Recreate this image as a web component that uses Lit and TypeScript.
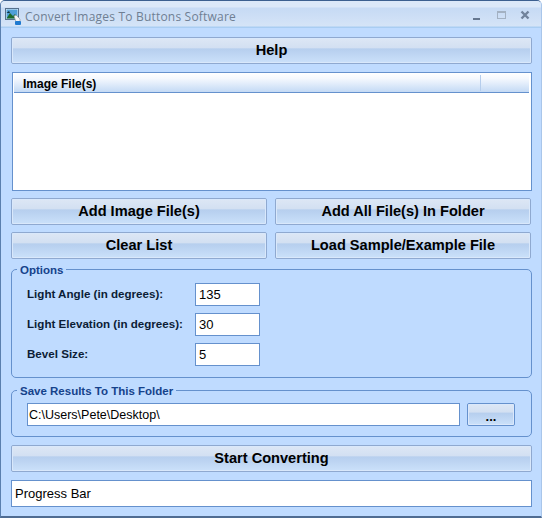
import { LitElement, html, css } from "lit";
import { customElement } from "lit/decorators.js";

@customElement("app-root")
export class AppRoot extends LitElement {
  static styles = css`
    :host {
      display: block;
      width: 542px;
      height: 518px;
      font-family: "Liberation Sans", Arial, sans-serif;
      color: #000;
    }
    * { box-sizing: border-box; }
    .window {
      width: 542px;
      height: 518px;
      display: flex;
      flex-direction: column;
      background: #bfdbff;
      border: 1px solid #5a7fae;
      border-top-color: #3b5f8f;
      border-bottom: 2px solid #4f6c92;
      border-right-color: #a9c6ea;
      border-radius: 5px 5px 0 0;
      overflow: hidden;
    }
    .titlebar {
      height: 27px;
      flex: none;
      display: flex;
      align-items: center;
      padding: 3px 0 0 4px;
      background: linear-gradient(#dbe8f8 0, #dbe8f8 6px, #c6daf4 7px, #d5e4f7 25px, #a9cdf2 26px);
      color: #6f7f93;
      gap: 3px;
    }
    .app-icon { width: 17px; height: 17px; flex: none; }
    .title {
      flex: 1;
      font-family: "Open Sans", sans-serif;
      font-size: 12px;
      letter-spacing: 0.2px;
      white-space: nowrap;
    }
    .controls { display: flex; align-items: center; padding: 0 1px 3px 0; }
    .controls svg { width: 24px; height: 14px; display: block; }
    .content {
      flex: 1;
      display: flex;
      flex-direction: column;
      padding: 9px 9px 0 9px;
      border-left: 2px solid #bfdbff;
    }
    .btn {
      display: flex;
      align-items: center;
      justify-content: center;
      height: 27px;
      padding-bottom: 2px;
      border: 1px solid #8fa9d0;
      border-radius: 2px;
      outline: 1px solid #d9e8fb;
      outline-offset: -2px;
      background: linear-gradient(#dde7f5 0, #d3e0f2 38%, #b7cfee 44%, #b9d1f0 52%, #cbe1fa 100%);
      font-size: 14.6px;
      font-weight: 700;
      color: #000;
      white-space: nowrap;
    }
    .help { margin-left: -1px; }
    .list {
      height: 119px;
      margin-top: 8px;
      background: #fff;
      border: 1px solid #6591cd;
      display: flex;
      flex-direction: column;
      padding: 0 2px 0 1px;
    }
    .list-head {
      height: 20px;
      flex: none;
      display: flex;
      align-items: center;
      padding-left: 9px;
      border-bottom: 1px solid #6591cd;
      background: linear-gradient(#fff 0, #f4f8fe 30%, #c4daf5 100%);
      font-size: 12px;
      font-weight: 700;
    }
    .col1 { width: 458px; height: 16px; line-height: 18px; border-right: 1px solid #b5cdec; }
    .row {
      display: grid;
      grid-template-columns: 256px 256px;
      gap: 8px;
      margin: 7px 0 0 -1px;
    }
    .group {
      position: relative;
      margin: 11px 0 0 -1px;
      border: 1px solid #6591cd;
      border-radius: 5px;
    }
    .legend {
      position: absolute;
      left: 5px;
      top: -7px;
      padding: 0 3px;
      background: #bfdbff;
      color: #15428b;
      font-size: 11.5px;
      font-weight: 700;
      line-height: 15px;
    }
    .options {
      height: 109px;
      margin-top: 10px;
      padding: 13px 0 0 15px;
      display: flex;
      flex-direction: column;
      gap: 7px;
    }
    .field {
      display: grid;
      grid-template-columns: 168px 65px;
      align-items: center;
      font-size: 11.6px;
      font-weight: 700;
      color: #0c1d36;
    }
    .label { padding-bottom: 2px; }
    .input {
      height: 23px;
      display: flex;
      align-items: center;
      background: #fff;
      border: 1px solid #6591cd;
      padding-left: 3px;
      font-size: 13px;
      font-weight: 400;
      color: #000;
    }
    .save {
      height: 47px;
      margin-top: 12px;
      padding: 12px 15px 0 15px;
      display: flex;
      gap: 7px;
      align-items: flex-start;
    }
    .save .input { width: 433px; font-size: 12.5px; padding-left: 1px; }
    .browse {
      width: 48px;
      height: 23px;
      border: 1px solid #6591cd;
      outline-color: #dbe8fb;
      padding: 0 0 1px;
      font-size: 13px;
      font-weight: 700;
      color: #000;
      align-items: flex-end;
    }
    .start { margin: 8px 0 0 -1px; }
    .progress {
      height: 27px;
      margin: 8px 0 0 -1px;
      background: #fff;
      border: 1px solid #6591cd;
      display: flex;
      align-items: center;
      padding-left: 3px;
      font-size: 13px;
    }
  `;

  render() {
    return html`
      <div class="window">
        <div class="titlebar">
          <svg class="app-icon" viewBox="0 0 17 17">
            <rect x="0.5" y="0.5" width="13" height="11" fill="#e9f1f8" stroke="#56708c"/>
            <rect x="1.5" y="1.5" width="11" height="9" fill="#4f9fd8"/>
            <path d="M1.5 10.5 L5 5 L8 8 L10 6 L12.5 10.5 Z" fill="#1d6a2a"/>
            <path d="M1.5 5 L4 3 L5 5 Z" fill="#0c2e3c"/>
            <path d="M9 8 L11 7 L15 11 L15 14 L11 14 Z" fill="#f4f4f4" stroke="#8a8f96" stroke-width="0.6"/>
            <rect x="10" y="13" width="6" height="4" rx="1" fill="#1f7ad0"/>
          </svg>
          <span class="title">Convert Images To Buttons Software</span>
          <div class="controls">
            <svg viewBox="0 0 24 14"><rect x="5" y="10" width="7" height="2" fill="#66778f"/></svg>
            <svg viewBox="0 0 24 14"><rect x="5.5" y="3.5" width="8" height="7" fill="none" stroke="#a3b1c2"/><rect x="5" y="3" width="9" height="2" fill="#a3b1c2"/></svg>
            <svg viewBox="0 0 24 14"><path d="M5.5 3.5 L12.5 10.5 M12.5 3.5 L5.5 10.5" stroke="#71839b" stroke-width="2.4" fill="none"/></svg>
          </div>
        </div>
        <div class="content">
          <div class="btn help">Help</div>
          <div class="list">
            <div class="list-head"><div class="col1">Image File(s)</div></div>
          </div>
          <div class="row">
            <div class="btn">Add Image File(s)</div>
            <div class="btn">Add All File(s) In Folder</div>
          </div>
          <div class="row">
            <div class="btn">Clear List</div>
            <div class="btn">Load Sample/Example File</div>
          </div>
          <div class="group options">
            <span class="legend">Options</span>
            <div class="field"><span class="label">Light Angle (in degrees):</span><div class="input">135</div></div>
            <div class="field"><span class="label">Light Elevation (in degrees):</span><div class="input">30</div></div>
            <div class="field"><span class="label">Bevel Size:</span><div class="input">5</div></div>
          </div>
          <div class="group save">
            <span class="legend">Save Results To This Folder</span>
            <div class="input">C:\\Users\\Pete\\Desktop\\</div>
            <div class="btn browse">...</div>
          </div>
          <div class="btn start">Start Converting</div>
          <div class="progress">Progress Bar</div>
        </div>
      </div>
    `;
  }
}
